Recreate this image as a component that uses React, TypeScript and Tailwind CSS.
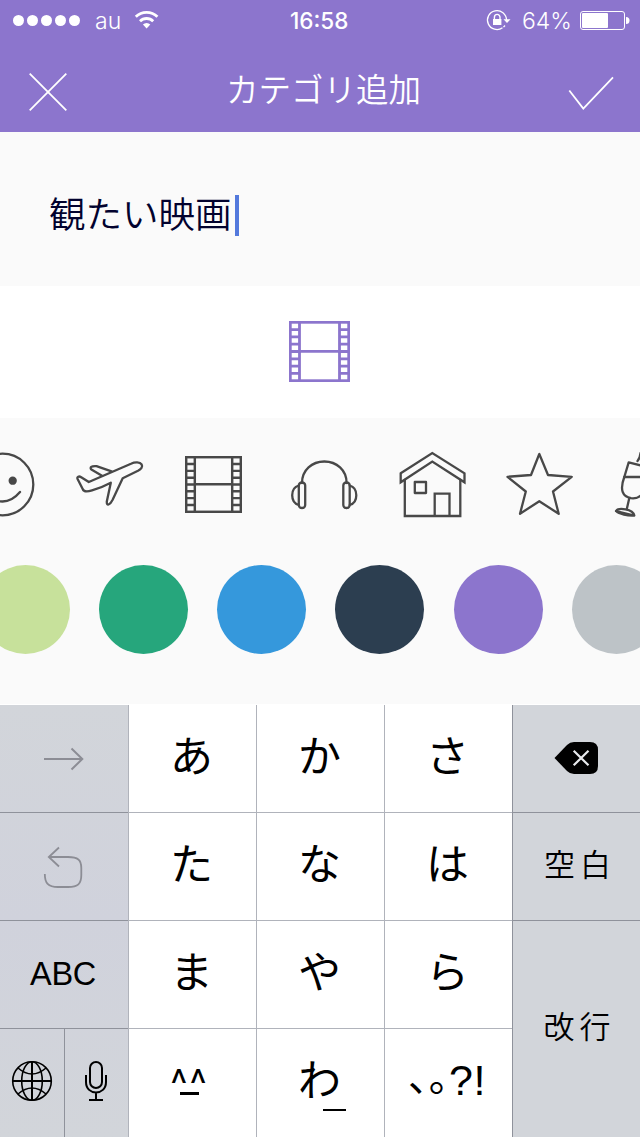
import type { ReactNode } from "react";

const JP = "font-['Noto_Sans_CJK_JP',sans-serif]";

function StatusBar() {
  return (
    <div className="flex h-10 items-center text-white">
      <svg width="92" height="40" viewBox="0 0 92 40" fill="currentColor">
        {[18.5, 32.5, 46.5, 60.5, 74.5].map((cx) => (
          <circle key={cx} cx={cx} cy="20.5" r="5.5" />
        ))}
      </svg>
      <span className="w-[40px] pl-[3px] pt-[2px] font-['Inter',sans-serif] text-[23px] leading-none font-light">au</span>
      <svg width="30" height="40" viewBox="132 0 30 40" fill="none" stroke="currentColor" strokeWidth="2.8">
        <path d="M135.8 16.8a15.4 15.4 0 0 1 21.6 0" />
        <path d="M140 21.2a9.4 9.4 0 0 1 13.2 0" />
        <path d="M142.9 24.6a5.3 5.3 0 0 1 7.4 0L146.6 28.4z" fill="currentColor" stroke="none" />
      </svg>
      <span className="w-[321px] pl-[128px] pt-[2px] font-['Inter',sans-serif] text-[22.5px] leading-none font-medium">16:58</span>
      <svg width="34" height="40" viewBox="483 0 34 40" fill="none" stroke="currentColor" strokeWidth="1.3">
        <path d="M506.5 20A9.5 9.5 0 1 0 502.5 27.8" />
        <path d="M503.5 19.2h7l-3.5 3.8z" fill="currentColor" stroke="none" />
        <path d="M505 25.5l-1.5 1.6" />
        <rect x="493" y="19" width="8.4" height="6" fill="currentColor" stroke="none" />
        <path d="M494.4 19.5v-2.3a2.8 2.8 0 0 1 5.6 0v2.3" strokeWidth="1.4" />
      </svg>
      <span className="w-[61px] pl-[5px] pt-[2px] font-['Inter',sans-serif] text-[23px] leading-none font-light">64%</span>
      <svg width="62" height="40" viewBox="578 0 62 40">
        <rect x="580.5" y="11.5" width="44" height="18" rx="2.5" fill="none" stroke="currentColor" />
        <rect x="582" y="13" width="26" height="15" rx="1" fill="currentColor" />
        <path d="M626 17a3.5 3.5 0 0 1 0 7z" fill="currentColor" />
      </svg>
    </div>
  );
}

function Header() {
  return (
    <header className="h-[132px] bg-[#8c75cd] text-white">
      <StatusBar />
      <div className="flex h-[92px] items-start justify-between">
        <svg width="96" height="92" viewBox="0 40 96 92" fill="none" stroke="currentColor" strokeWidth="1.8">
          <path d="M29.7 73.7L66.3 110.3M66.3 73.7L29.7 110.3" />
        </svg>
        <h1 className={`${JP} pt-[24px] pl-[7px] text-[32.5px] leading-[48px] font-[350] whitespace-nowrap`}>カテゴリ追加</h1>
        <svg width="96" height="92" viewBox="544 40 96 92" fill="none" stroke="currentColor" strokeWidth="1.8">
          <path d="M569.3 90.5L583.3 108.5L613 77.3" />
        </svg>
      </div>
    </header>
  );
}

const HOLES = [0, 1, 2, 3, 4, 5, 6, 7];

function Film({ size, className, line }: { size: number; className: string; line: number }) {
  return (
    <svg width={size} height={size} viewBox="0 0 61 61" className={className} fill="none" stroke="currentColor" strokeWidth={line}>
      <rect x="1.3" y="1.3" width="58.4" height="58.4" />
      <path d="M10.5 1V60M50.5 1V60M10.5 30.3H50.5" />
      {HOLES.slice(1).map((i) => (
        <path key={i} d={`M1 ${1.3 + i * 7.3}H10.5M50.5 ${1.3 + i * 7.3}H60`} />
      ))}
    </svg>
  );
}

function Slot({ box, children }: { box: string; children: ReactNode }) {
  return (
    <svg width="108" height="80" viewBox={box} className="shrink-0" fill="none" stroke="currentColor" strokeWidth="2.3" strokeLinejoin="round" strokeLinecap="round">
      {children}
    </svg>
  );
}

function IconPicker() {
  return (
    <div className="-ml-[52px] flex h-[80px] w-[760px] text-[#484848]">
      <Slot box="-52 445 108 80">
        <circle cx="2.5" cy="484.5" r="30.8" />
        <circle cx="12.7" cy="480.7" r="3" fill="currentColor" />
        <circle cx="-7.7" cy="480.7" r="3" fill="currentColor" />
        <path d="M-15 492.5Q-7 501.5 2.5 501.5T20 492" />
      </Slot>
      <Slot box="56 445 108 80">
        <path d="M88.8 482L131 463.7C135 461.8 140 461.8 141.6 464.4C143.2 467 141 469.2 138 470.8L122.7 478.2L112.5 500C110 505 106.5 506.5 106.8 501.5L110.8 482.7Q102 487.5 92 490.3C87 492 83.6 491.5 82.7 489L77.7 479.2C76.6 476.7 79 475.8 81.2 477.2Z" />
        <path d="M102 475.8L91.8 469.8C89 467.5 91.5 465.7 96.5 466.1L111.5 471.4" />
      </Slot>
      <div className="flex w-[108px] shrink-0 pt-[11px] pl-[21px]">
        <Film size={57} className="" line={2.6} />
      </div>
      <Slot box="272 445 108 80">
        <path d="M302 483C302 470 312 461.5 324.3 461.5S346.6 470 346.6 483" />
        <rect x="298.8" y="482.5" width="6.4" height="25.5" rx="3" />
        <rect x="343.3" y="482.5" width="6.4" height="25.5" rx="3" />
        <path d="M298.8 485.5C290 488 290 502.5 298.8 505M349.7 485.5C358.5 488 358.5 502.5 349.7 505" />
      </Slot>
      <Slot box="380 445 108 80">
        <path d="M400.7 473.3L432.3 453L464.5 473.3V482.3L432.3 461.5L400.7 482.3Z" strokeLinejoin="miter" />
        <path d="M404.8 480V516H460.3V480M434.7 516V493.7H449.5V516" strokeLinejoin="miter" />
        <rect x="414.8" y="482" width="11.2" height="11" />
      </Slot>
      <Slot box="488 445 108 80">
        <path d="M539.3 454L531 475L507.5 476.8L525.8 491.5L520 513.8L539.3 501.2L558.7 513.8L553 491.5L571.7 476.8L548 475Z" />
      </Slot>
      <Slot box="596 445 108 80">
        <path d="M628.7 462.3L624.3 477C619.5 490 622.5 496.5 631 498.2C640 499.5 646 492 648 481L651 468Z" />
        <path d="M624.3 477H649M629.2 498.5L626.8 509" />
        <path d="M616 511C618 507.5 633 508.5 634.3 515.5C628 516 619 514 616 511ZM616 511L634.3 515.5" />
        <path d="M637.5 461Q640 458 640.5 453" />
      </Slot>
    </div>
  );
}

function ColorPicker() {
  const dot = "size-[89px] shrink-0 rounded-full";
  return (
    <div className="-ml-[19px] mt-[39.5px] flex w-[760px] items-start">
      <div className={`${dot} bg-[#c7e19b]`} />
      <div className={`${dot} ml-[29px] bg-[#26a67c]`} />
      <div className={`${dot} mt-[0.5px] ml-[28.5px] bg-[#3598dc]`} />
      <div className={`${dot} mt-[0.5px] ml-[29px] bg-[#2c3e50]`} />
      <div className={`${dot} ml-[30.5px] bg-[#8c75cd]`} />
      <div className={`${dot} ml-[28.5px] bg-[#bdc3c7]`} />
    </div>
  );
}

function Kana({ children }: { children: ReactNode }) {
  return (
    <div className={`${JP} flex h-[108px] items-start justify-center border-b border-l border-[#b0b3bb] bg-white pt-[18px] pr-[2px] text-[43px] leading-[60px] text-black`}>
      {children}
    </div>
  );
}

function Keyboard() {
  return (
    <div className="grid h-[432px] grid-cols-5 bg-[#d2d5da] text-black">
      <div className="bg-linear-to-b from-[#d2d5da] via-[#d0d2dc] to-[#d2d5da]">
        <div className="h-[108px] border-b border-[#8f929b]">
          <svg width="128" height="107" viewBox="0 705 128 107" fill="none" stroke="#8c8d95" strokeWidth="2">
            <path d="M44 759H82.5M71.5 748.5L82.3 759L71.5 769.5" />
          </svg>
        </div>
        <div className="h-[108px] border-b border-[#8f929b]">
          <svg width="128" height="107" viewBox="0 813 128 107" fill="none" stroke="#8c8d95" strokeWidth="1.8">
            <path d="M59 847.5L48.8 857L59 866.5M49 857H68C78 857 81.3 860 81.3 868V875C81.3 884 78 887 68 887H58C48 887 44.8 883 44.8 874" />
          </svg>
        </div>
        <div className="flex h-[108px] items-center justify-center border-b border-[#8f929b] pr-[2px] pb-px font-['Liberation_Sans',sans-serif] text-[32.5px] tracking-[-0.3px]">ABC</div>
        <div className="flex h-[108px]">
          <svg width="64" height="108" viewBox="0 1029 64 108" fill="none" stroke="currentColor" strokeWidth="1.6">
            <circle cx="32" cy="1081" r="19.3" />
            <ellipse cx="32" cy="1081" rx="10.3" ry="19.3" />
            <path d="M32 1061.7V1100.3M12.7 1081H51.3" strokeWidth="2" />
            <path d="M18 1068Q32 1080 46 1068M18 1094Q32 1082 46 1094" />
          </svg>
          <div className="border-l border-[#8f929b]">
            <svg width="63" height="108" viewBox="65 1029 63 108" fill="none" stroke="currentColor" strokeWidth="2">
              <rect x="90" y="1062" width="12" height="26" rx="6" />
              <path d="M86 1075V1082C86 1096 106 1096 106 1082V1075M96 1092.5V1100M89 1100H103" />
            </svg>
          </div>
        </div>
      </div>
      <div>
        <Kana>あ</Kana>
        <Kana>た</Kana>
        <Kana>ま</Kana>
        <div className={`${JP} flex h-[108px] flex-col items-center border-l border-[#b0b3bb] bg-white pt-[33px] pr-[7px] text-[32px] leading-[34px] font-medium tracking-[1px]`}>
          <span>^^</span>
          <span className="-mt-[4px] h-[3px] w-[19px] bg-black" />
        </div>
      </div>
      <div>
        <Kana>か</Kana>
        <Kana>な</Kana>
        <Kana>や</Kana>
        <div className={`${JP} flex h-[108px] flex-col items-center border-l border-[#b0b3bb] bg-white pt-[18px] pr-[2px] text-[43px] leading-[60px]`}>
          <span>わ</span>
          <span className="mt-[2px] ml-[30px] h-[2px] w-[23px] bg-black" />
        </div>
      </div>
      <div>
        <Kana>さ</Kana>
        <Kana>は</Kana>
        <Kana>ら</Kana>
        <div className={`${JP} flex h-[108px] items-start border-l border-[#b0b3bb] bg-white pl-[24px] leading-[60px] whitespace-nowrap`}>
          <span className="pt-[15px] text-[40px]">､｡</span>
          <span className="pt-[21px] font-['Liberation_Sans',sans-serif] text-[43px] tracking-[0.5px]">?!</span>
        </div>
      </div>
      <div className="border-l border-[#8f929b]">
        <div className="h-[108px] border-b border-[#8f929b]">
          <svg width="127" height="107" viewBox="513 705 127 107">
            <path d="M554.5 758L567 745Q570 742 574 742H590Q598 742 598 750V766Q598 774 590 774H574Q570 774 567 771Z" fill="currentColor" />
            <path d="M573.7 750.7L588.5 765.3M588.5 750.7L573.7 765.3" stroke="#e8eaed" strokeWidth="2.2" />
          </svg>
        </div>
        <div className={`${JP} flex h-[108px] justify-center border-b border-[#8f929b] pt-[27px] pl-[7px] text-[31px] leading-[46px] font-[350] tracking-[5px]`}>空白</div>
        <div className={`${JP} flex h-[216px] justify-center pt-[81px] pl-[6px] text-[31px] leading-[46px] font-[350] tracking-[5px]`}>改行</div>
      </div>
    </div>
  );
}

export default function App() {
  return (
    <main className="h-[1137px] w-[640px] overflow-hidden bg-white">
      <Header />
      <section className="flex h-[154px] bg-[#fafafa] pt-[54px] pl-[49px]">
        <span className={`${JP} text-[36.5px] leading-[54px] font-[350] text-[#02022e]`}>観たい映画</span>
        <span className="mt-[9px] ml-[3px] h-[41px] w-[4px] bg-[#5379dc]" />
      </section>
      <section className="flex h-[132px] justify-center bg-white pt-[35px] pr-[1px]">
        <Film size={61} className="text-[#8c75cd]" line={2.8} />
      </section>
      <section className="h-[286px] overflow-hidden bg-[#fafafa] pt-[27px]">
        <IconPicker />
        <ColorPicker />
      </section>
      <div className="h-px bg-white" />
      <Keyboard />
    </main>
  );
}
